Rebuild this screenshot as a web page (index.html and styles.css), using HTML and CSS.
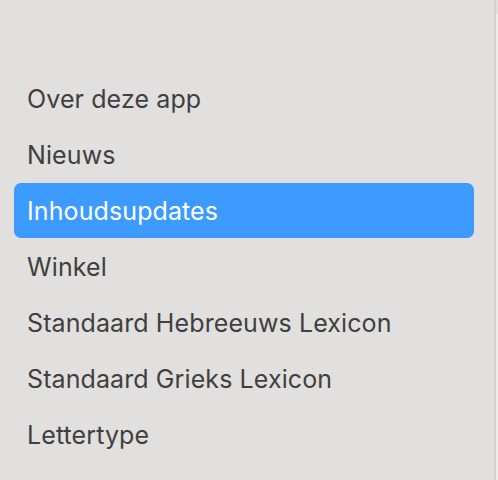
FILE: index.html
```html
<!DOCTYPE html>
<html>
<head>
<meta charset="utf-8">
<link rel="stylesheet" href="styles.css">
</head>
<body>
<div class="layout">
  <nav class="sidebar">
    <ul class="menu">
      <li class="item">Over deze app</li>
      <li class="item">Nieuws</li>
      <li class="item selected">Inhoudsupdates</li>
      <li class="item">Winkel</li>
      <li class="item">Standaard Hebreeuws Lexicon</li>
      <li class="item">Standaard Grieks Lexicon</li>
      <li class="item">Lettertype</li>
    </ul>
  </nav>
  <div class="divider"></div>
  <div class="content"></div>
</div>
</body>
</html>
```
FILE: styles.css
```css
html, body {
  margin: 0;
  padding: 0;
  height: 100%;
}
body {
  background: #e2e0de;
  font-family: Inter, "Liberation Sans", sans-serif;
  overflow: hidden;
}
.layout {
  display: flex;
  height: 480px;
}
.sidebar {
  width: 494px;
  flex: none;
}
.menu {
  list-style: none;
  margin: 0;
  padding: 71px 0 0 14px;
  width: 460px;
}
.item {
  height: 56px;
  display: flex;
  align-items: center;
  padding-left: 13px;
  font-size: 25px;
  color: #404040;
  border-radius: 7px;
  letter-spacing: 0.1px;
}
.item.selected {
  background: #3d9bff;
  color: #ffffff;
  height: 55px;
  margin: 0 0 1px;
}
.divider {
  width: 2px;
  flex: none;
  background: #d3d1cf;
}
.content {
  flex: 1;
  margin-top: 14px;
  background: #eeedeb;
}
```
